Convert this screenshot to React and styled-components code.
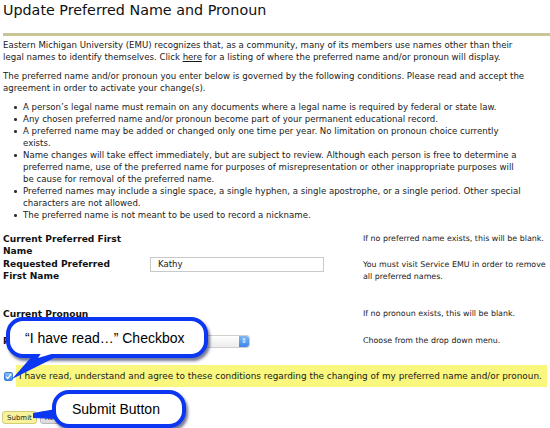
import React from "react";
import styled, { createGlobalStyle } from "styled-components";

const Global = createGlobalStyle`
  html, body { margin: 0; padding: 0; background: #fff; }
  body { width: 550px; height: 428px; overflow: hidden; }
`;

const Page = styled.div`
  position: relative;
  width: 550px;
  height: 428px;
  overflow: hidden;
  font-family: "DejaVu Sans", Verdana, sans-serif;
  font-size: 8.6px;
  line-height: 12px;
  color: #1a1a1a;
  padding: 0 3px;
  box-sizing: border-box;
`;

const Title = styled.h1`
  margin: 0;
  padding-top: 1px;
  font-size: 14.3px;
  line-height: 19px;
  font-weight: normal;
  color: #111;
`;

const Rule = styled.div`
  height: 3px;
  background: #c9c597;
  margin: 13px -3px 0 0;
`;

const Para = styled.p`
  margin: ${(p) => p.$top || 0}px 0 0 0;
  white-space: nowrap;
`;

const Link = styled.a`
  color: inherit;
  text-decoration: underline;
`;

const List = styled.ul`
  margin: 7px 0 0 0;
  padding-left: 20px;
  list-style: none;
  white-space: nowrap;
`;

const Item = styled.li`
  position: relative;
  &::before {
    content: "";
    position: absolute;
    left: -9px;
    top: 5px;
    width: 2.5px;
    height: 2.5px;
    border-radius: 50%;
    background: #333;
  }
`;

const Form = styled.div`
  margin-top: 12px;
  display: grid;
  grid-template-columns: 147px 213px 1fr;
  white-space: nowrap;
`;

const Label = styled.div`
  font-weight: bold;
  font-size: 9.1px;
  line-height: 12px;
  color: #111;
  padding-top: ${(p) => p.$pt || 0}px;
`;

const Cell = styled.div`
  padding-top: ${(p) => p.$pt || 0}px;
`;

const Note = styled.div`
  font-size: 7.9px;
  line-height: 12px;
  padding-top: ${(p) => p.$pt || 0}px;
`;

const Spacer = styled.div`
  grid-column: 1 / -1;
  height: ${(p) => p.$h}px;
`;

const TextInput = styled.div`
  width: 174px;
  height: 15px;
  border: 1px solid #c9c9c9;
  box-sizing: border-box;
  padding-left: 7px;
  line-height: 13px;
  color: #222;
  background: #fff;
`;

const Select = styled.div`
  width: 100px;
  height: 13px;
  border-radius: 3px;
  border: 1px solid #cfcfcf;
  background: linear-gradient(#ffffff, #ececec);
  box-sizing: border-box;
  display: flex;
  justify-content: flex-end;
`;

const SelectArrow = styled.div`
  width: 10px;
  height: 100%;
  border-radius: 0 3px 3px 0;
  background: linear-gradient(#7fb4f5, #3f86ea);
  display: flex;
  align-items: center;
  justify-content: center;
  color: #fff;
  font-size: 7px;
  line-height: 1;
`;

const AgreeRow = styled.div`
  margin-top: 17px;
  display: flex;
  align-items: center;
  margin-left: -2px;
  white-space: nowrap;
`;

const Check = styled.span`
  flex: none;
  width: 9px;
  height: 9px;
  border-radius: 2px;
  background: linear-gradient(#8ec0f7, #3d88ec);
  border: 1px solid #3a7fd8;
  box-sizing: border-box;
  display: flex;
  align-items: center;
  justify-content: center;
  margin: 0 3px 0 3px;
`;

const Highlight = styled.span`
  background: #f9f77e;
  padding: 5px 4px 5px 3px;
  line-height: 12px;
  font-size: 8.9px;
  flex: 1;
`;

const ButtonRow = styled.div`
  margin-top: 24px;
  display: flex;
  gap: 3px;
  margin-left: -1px;
`;

const Button = styled.div`
  height: 13px;
  padding: 0 4px;
  border-radius: 3px;
  border: 1px solid ${(p) => (p.$primary ? "#d2cd78" : "#b9b9b9")};
  background: ${(p) => (p.$primary ? "#f8f39a" : "linear-gradient(#f3f3f3, #dadada)")};
  font-size: 7px;
  line-height: 12px;
  color: #222;
  box-sizing: border-box;
`;

const Callout = styled.div`
  position: absolute;
  left: ${(p) => p.$x}px;
  top: ${(p) => p.$y}px;
  width: ${(p) => p.$w}px;
  height: ${(p) => p.$h}px;
  box-sizing: border-box;
  border: 4px solid #0b36f2;
  border-radius: 17px;
  background: #fff;
  box-shadow: 2px 3px 3px rgba(0, 10, 60, 0.55);
  display: flex;
  align-items: center;
  padding-left: ${(p) => p.$pl}px;
  font-family: "Liberation Sans", Arial, sans-serif;
  font-size: 14px;
  white-space: nowrap;
  color: #000;
  z-index: 2;
`;

const Tail = styled.svg`
  position: absolute;
  left: ${(p) => p.$x}px;
  top: ${(p) => p.$y}px;
  z-index: 3;
  overflow: visible;
`;

export default function App() {
  return (
    <>
      <Global />
      <Page>
        <Title>Update Preferred Name and Pronoun</Title>
        <Rule />
        <Para $top={3}>
          Eastern Michigan University (EMU) recognizes that, as a community, many of its members use names other than their
          <br />
          legal names to identify themselves. Click <Link>here</Link> for a listing of where the preferred name and/or pronoun will display.
        </Para>
        <Para $top={7}>
          The preferred name and/or pronoun you enter below is governed by the following conditions. Please read and accept the
          <br />
          agreement in order to activate your change(s).
        </Para>
        <List>
          <Item>A person’s legal name must remain on any documents where a legal name is required by federal or state law.</Item>
          <Item>Any chosen preferred name and/or pronoun become part of your permanent educational record.</Item>
          <Item>
            A preferred name may be added or changed only one time per year. No limitation on pronoun choice currently
            <br />
            exists.
          </Item>
          <Item>
            Name changes will take effect immediately, but are subject to review. Although each person is free to determine a
            <br />
            preferred name, use of the preferred name for purposes of misrepresentation or other inappropriate purposes will
            <br />
            be cause for removal of the preferred name.
          </Item>
          <Item>
            Preferred names may include a single space, a single hyphen, a single apostrophe, or a single period. Other special
            <br />
            characters are not allowed.
          </Item>
          <Item>The preferred name is not meant to be used to record a nickname.</Item>
        </List>

        <Form>
          <Label>
            Current Preferred First
            <br />
            Name
          </Label>
          <Cell />
          <Note>If no preferred name exists, this will be blank.</Note>

          <Label $pt={1}>
            Requested Preferred
            <br />
            First Name
          </Label>
          <Cell $pt={0}>
            <TextInput>Kathy</TextInput>
          </Cell>
          <Note $pt={2}>
            You must visit Service EMU in order to remove
            <br />
            all preferred names.
          </Note>

          <Spacer $h={25} />

          <Label>Current Pronoun</Label>
          <Cell />
          <Note>If no pronoun exists, this will be blank.</Note>

          <Spacer $h={15} />

          <Label>Preferred Pronoun</Label>
          <Cell>
            <Select>
              <SelectArrow>⇕</SelectArrow>
            </Select>
          </Cell>
          <Note>Choose from the drop down menu.</Note>
        </Form>

        <AgreeRow>
          <Check>
            <svg width="7" height="7" viewBox="0 0 7 7">
              <path d="M1 3.6 L2.8 5.4 L6 1.2" fill="none" stroke="#fff" strokeWidth="1.3" />
            </svg>
          </Check>
          <Highlight>
            I have read, understand and agree to these conditions regarding the changing of my preferred name and/or pronoun.
          </Highlight>
        </AgreeRow>

        <ButtonRow>
          <Button $primary>Submit</Button>
          <Button>Reset</Button>
        </ButtonRow>

        <Callout $x={6} $y={317} $w={202} $h={41} $pl={15}>
          “I have read…” Checkbox
        </Callout>
        <Tail $x={0} $y={348} width="80" height="40">
          <polygon points="34,6 62,6 12,31" fill="#0b36f2" />
          <polygon points="42,4 58,4 38,10" fill="#fff" />
        </Tail>

        <Callout $x={52} $y={390} $w={134} $h={38} $pl={16}>
          Submit Button
        </Callout>
        <Tail $x={30} $y={405} width="30" height="20">
          <polygon points="3,8 26,4 26,14 3,13" fill="#0b36f2" />
        </Tail>
      </Page>
    </>
  );
}
